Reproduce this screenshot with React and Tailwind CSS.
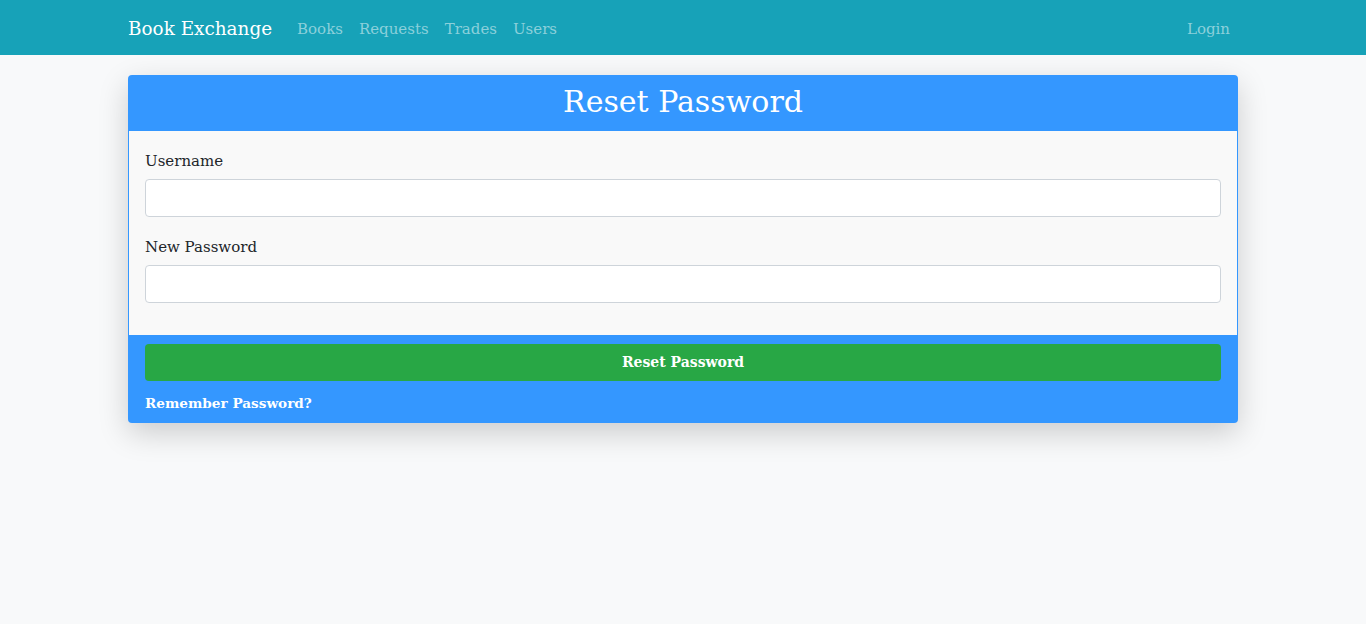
export default function App() {
  return (
    <div className="min-h-screen bg-[#f8f9fa] font-['DejaVu_Serif',serif]">
      <nav className="h-[55px] bg-[#17a2b8]">
        <div className="mx-auto flex h-full w-[1110px] items-center pt-[3px]">
          <a href="#" className="mr-[25px] text-[18.4px] text-white">Book Exchange</a>
          <div className="flex gap-4 text-[15px] text-[#8bd0db]">
            <a href="#">Books</a>
            <a href="#">Requests</a>
            <a href="#">Trades</a>
            <a href="#">Users</a>
          </div>
          <a href="#" className="ml-auto mr-2 text-[15px] text-[#8bd0db]">Login</a>
        </div>
      </nav>

      <div className="mx-auto mt-5 w-[1110px] overflow-hidden rounded-[4px] bg-[#3497ff] shadow-[0_10px_30px_rgba(0,0,0,0.18)]">
        <div className="flex h-[56px] items-center justify-center pb-[3px]">
          <h1 className="text-[30px] text-white">Reset Password</h1>
        </div>
        <div className="mx-px bg-[#f9f9f9] px-4 pt-[19px] pb-8">
          <label className="block text-[15px] text-[#212529]">Username</label>
          <input className="mt-[6px] block h-[38px] w-full rounded-[4px] border border-[#ced4da] bg-white" />
          <label className="mt-[19px] block text-[15px] text-[#212529]">New Password</label>
          <input type="password" className="mt-[7px] block h-[38px] w-full rounded-[4px] border border-[#ced4da] bg-white" />
        </div>
        <div className="px-[17px] pt-[9px] pb-[10px]">
          <button className="h-[37px] w-full rounded-[4px] bg-[#28a745] text-[14px] font-bold text-white">Reset Password</button>
          <a href="#" className="mt-[12px] block text-[13.6px] font-bold text-white">Remember Password?</a>
        </div>
      </div>
    </div>
  );
}
